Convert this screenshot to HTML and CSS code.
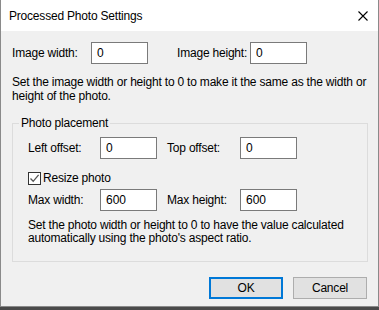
FILE: index.html
```html
<!DOCTYPE html>
<html lang="en">
<head>
  <meta charset="UTF-8">
  <title>Processed Photo Settings</title>
  <link rel="stylesheet" href="styles.css">
</head>
<body>
  <div class="dialog">
    <div class="titlebar">
      <span class="title">Processed Photo Settings</span>
      <svg class="close" width="10" height="10" viewBox="0 0 10 10">
        <path d="M0.5 0.5 L9.5 9.5 M9.5 0.5 L0.5 9.5" stroke="#000" stroke-width="1.1" fill="none"/>
      </svg>
    </div>
    <div class="content">
      <div class="row">
        <label class="lbl lbl-img-w">Image width:</label>
        <input class="field" type="text" value="0">
        <label class="lbl lbl-img-h">Image height:</label>
        <input class="field" type="text" value="0">
      </div>
      <p class="note">Set the image width or height to 0 to make it the same as the width or height of the photo.</p>

      <fieldset class="group">
        <legend>Photo placement</legend>
        <div class="row">
          <label class="lbl lbl-grp">Left offset:</label>
          <input class="field" type="text" value="0">
          <label class="lbl lbl-grp-r">Top offset:</label>
          <input class="field" type="text" value="0">
        </div>
        <div class="check-row">
          <span class="checkbox">
            <svg width="11" height="11" viewBox="0 0 11 11">
              <path d="M1.5 5.5 L4.2 8.3 L9.6 1.8" stroke="#555" stroke-width="1.3" fill="none"/>
            </svg>
          </span>
          <span>Resize photo</span>
        </div>
        <div class="row">
          <label class="lbl lbl-grp">Max width:</label>
          <input class="field" type="text" value="600">
          <label class="lbl lbl-grp-r">Max height:</label>
          <input class="field" type="text" value="600">
        </div>
        <p class="note note-grp">Set the photo width or height to 0 to have the value calculated automatically using the photo's aspect ratio.</p>
      </fieldset>

      <div class="buttons">
        <button class="btn btn-default">OK</button>
        <button class="btn">Cancel</button>
      </div>
    </div>
  </div>
</body>
</html>
```

FILE: styles.css
```css
body {
  margin: 0;
  background: #4a4a4a;
  font-family: 'Liberation Sans', Arial, sans-serif;
  font-size: 12px;
  letter-spacing: -0.2px;
  color: #000;
}
.dialog {
  width: 377px;
  height: 306px;
  border: 1px solid #8a8a8a;
  border-top: none;
  background: #f0f0f0;
  display: flex;
  flex-direction: column;
}
.titlebar {
  height: 31px;
  background: #fff;
  display: flex;
  align-items: center;
  justify-content: space-between;
  padding: 0 10px 0 8px;
}
.title {
  font-size: 12px;
  margin-top: 1px;
}
.close {
  margin-top: 1px;
}
.content {
  padding: 11px 10px 0 11px;
  display: flex;
  flex-direction: column;
}
.row {
  display: flex;
  align-items: center;
  height: 22px;
}
.lbl {
  display: inline-block;
}
.lbl-img-w { width: 79px; }
.lbl-img-h { width: 73px; margin-left: 29px; }
.lbl-grp { width: 72px; }
.lbl-grp-r { width: 73px; margin-left: 10px; }
.field {
  box-sizing: border-box;
  width: 57px;
  height: 22px;
  border: 1px solid #7a7a7a;
  background: #fff;
  padding: 0 5px;
  font-family: inherit;
  font-size: 12px;
  color: #000;
  outline: none;
}
.note {
  margin: 11px 0 0;
  line-height: 14px;
}
.group {
  margin: 13px 0 0;
  padding: 7px 15px 16px;
  border: 1px solid #dcdcdc;
  min-width: 0;
}
.group legend {
  padding: 0 2px;
  margin-left: -9px;
  line-height: 14px;
}
.check-row {
  display: flex;
  align-items: center;
  gap: 2px;
  margin: 12px 0 4px;
  height: 14px;
}
.checkbox {
  box-sizing: border-box;
  width: 13px;
  height: 13px;
  border: 1px solid #333;
  background: #fff;
  display: flex;
  align-items: center;
  justify-content: center;
}
.note-grp {
  margin-top: 8px;
  line-height: 13px;
}
.buttons {
  display: flex;
  justify-content: flex-end;
  gap: 10px;
  margin-top: 15px;
  margin-right: 1px;
}
.btn {
  box-sizing: border-box;
  width: 74px;
  height: 22px;
  border: 1px solid #adadad;
  background: #e1e1e1;
  font-family: inherit;
  font-size: 12px;
  letter-spacing: inherit;
  color: #000;
  padding: 0;
}
.btn-default {
  border: 2px solid #0078d7;
}
```
